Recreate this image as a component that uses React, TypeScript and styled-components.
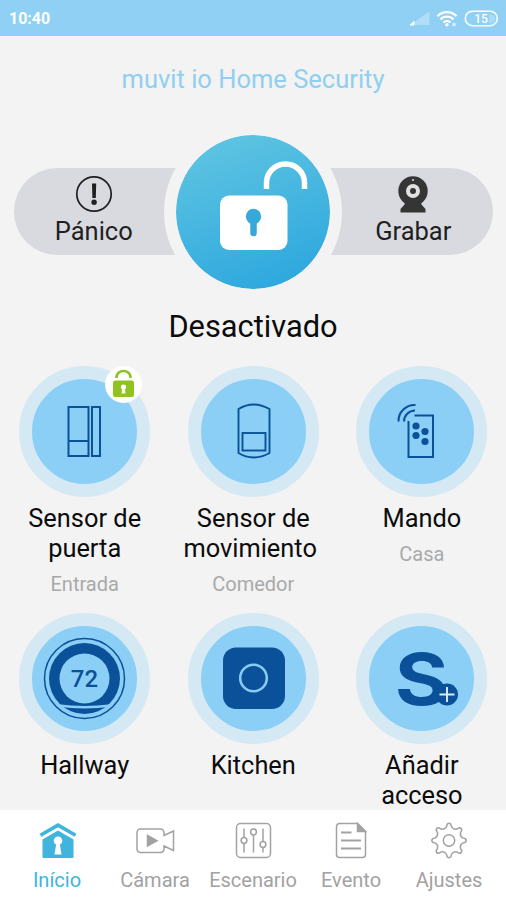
import React from 'react';
import styled, { createGlobalStyle } from 'styled-components';

const NAVY = '#0b5199';
const SKY = '#8bcff6';
const GREY = '#a2a2a2';
const PAGE = '#f3f3f3';

const GlobalStyle = createGlobalStyle`
  * { box-sizing: border-box; }
  body { margin: 0; background: ${PAGE}; font-family: Roboto, sans-serif; }
  svg { display: block; overflow: visible; }
`;

const Screen = styled.div`
  width: 506px;
  height: 900px;
  display: flex;
  flex-direction: column;
  overflow: hidden;
  background: ${PAGE};
`;

const StatusBar = styled.header`
  flex: 0 0 36px;
  display: flex;
  align-items: center;
  justify-content: space-between;
  padding: 1px 7px 0 9px;
  background: #8fd0f4;
  color: #fff;
`;

const Clock = styled.span`
  font-size: 16px;
  font-weight: 700;
`;

const Main = styled.main`
  flex: 1;
  min-height: 0;
  overflow: hidden;
`;

const Title = styled.h1`
  margin: 28px 0 0;
  height: 30px;
  line-height: 30px;
  text-align: center;
  font-size: 25.5px;
  font-weight: 400;
  letter-spacing: 0;
  color: #90cff1;
`;

const Hero = styled.section`
  display: flex;
  align-items: center;
  padding: 0 13px 0 14px;
  margin-top: 28.5px;
  height: 178px;
`;

const SideButton = styled.button<{ $side: 'left' | 'right' }>`
  flex: 1;
  height: 87px;
  border: 0;
  margin: 0;
  padding: ${p => (p.$side === 'left' ? '7px 21px 0 0' : '7px 0 0 21px')};
  border-radius: ${p => (p.$side === 'left' ? '44px 0 0 44px' : '0 44px 44px 0')};
  background: #d9dadf;
  display: flex;
  flex-direction: column;
  align-items: center;
  font: 400 25.5px/30px Roboto, sans-serif;
  color: #1f1f22;
`;

const SideLabel = styled.span`
  margin-top: 3px;
`;

const LockDial = styled.button`
  flex: 0 0 178px;
  height: 178px;
  margin: 0 -29px 0 -31px;
  padding: 0;
  border: 12px solid ${PAGE};
  border-radius: 50%;
  background: linear-gradient(160deg, #62c6e2 8%, #29a5de 92%) border-box;
  background-clip: padding-box;
  z-index: 1;
`;

const Status = styled.h2`
  margin: 10px 0 0;
  height: 32px;
  line-height: 32px;
  text-align: center;
  font-size: 30.8px;
  font-weight: 400;
  color: #0c0c0c;
`;

const DeviceGrid = styled.section`
  display: grid;
  grid-template-columns: repeat(3, 168.6px);
  grid-auto-rows: 247px;
  margin-top: 23.5px;
  padding-left: 0.4px;
`;

const Device = styled.article`
  display: flex;
  flex-direction: column;
  align-items: center;
  text-align: center;
`;

const Disc = styled.div`
  position: relative;
  width: 131px;
  height: 131px;
  border-radius: 50%;
  background: ${SKY};
  border: 13px solid #d5e9f4;
  display: grid;
  place-items: center;
`;

const LockBadge = styled.span`
  position: absolute;
  top: -13.5px;
  right: -5px;
  width: 37px;
  height: 37px;
  border-radius: 50%;
  background: #fff;
`;

const DeviceName = styled.h3`
  margin: 6px 0 0;
  font-size: 25.4px;
  line-height: 30px;
  font-weight: 400;
  color: #0c0c0c;
  white-space: pre-line;
`;

const DeviceRoom = styled.p`
  margin: 5.5px 0 0;
  font-size: 20px;
  line-height: 30px;
  color: #a9a9a9;
`;

const TabBar = styled.nav`
  flex: 0 0 90px;
  display: grid;
  grid-template-columns: repeat(5, 98px);
  justify-content: center;
  background: #fff;
`;

const Tab = styled.a<{ $active?: boolean }>`
  display: flex;
  flex-direction: column;
  align-items: center;
  padding-top: 10px;
  font-size: 20px;
  line-height: 24px;
  color: ${p => (p.$active ? '#3fb4dc' : GREY)};
`;

const TabLabel = styled.span`
  margin-top: 6px;
`;

const StatusIcons = () => (
  <svg width="90" height="20" viewBox="409 8 90 20" fill="none">
    <g transform="translate(0 -0.500)">
    <path d="M410 24.5 L429.500 24.500 V11Z" fill="#fff" opacity=".3" />
    <path d="M410 24.500 L414 21 V24.500Z" fill="#fff" stroke="#fff" />
    <g stroke="#fff" strokeWidth="2.300">
      <path d="M437.500 15.800a13 13 0 0 1 19 0" />
      <path d="M440.500 19a9 9 0 0 1 13 0" />
      <path d="M443.500 22a5 5 0 0 1 7 0" />
    </g>
    <circle cx="447" cy="24.300" r="1.700" fill="#fff" />
    <circle cx="454" cy="24" r="2" fill="#fff" opacity=".6" />
    <rect x="465.300" y="10.700" width="32" height="14.500" rx="7.200" stroke="#fff" strokeWidth="1.500" />
    <path d="M489 14v8.500h2a4 4 0 0 0 0-8.500z" fill="#fff" opacity=".25" />
    <text x="481" y="22.500" textAnchor="middle" fill="#fff" fontFamily="Roboto" fontSize="12" fontWeight="500">15</text>
    </g>
  </svg>
);

const AlertIcon = () => (
  <svg width="38" height="38" viewBox="0 0 38 38">
    <circle cx="19" cy="19" r="17.200" fill="none" stroke="#1f1f22" strokeWidth="1.700" />
    <path d="M17 8.500h4.200l-.4 14.500h-3.400z" fill="#1f1f22" />
    <circle cx="19.100" cy="27.300" r="2.700" fill="#1f1f22" />
  </svg>
);

const WebcamIcon = () => (
  <svg width="38" height="38" viewBox="0 0 38 38" fill="#353535">
    <path d="M12 26h14q1 4 5.500 8v3.500h-25V34q4.500-4 5.500-8z" />
    <circle cx="19" cy="16" r="14.700" />
    <circle cx="19" cy="16" r="5" fill="none" stroke="#e1e1e3" strokeWidth="4" />
    <circle cx="19" cy="5" r="1" fill="#d9dadf" />
  </svg>
);

const OpenLockIcon = () => (
  <svg width="154" height="154" viewBox="176 135 154 154">
    <path d="M266.500 189v-6a19 19 0 0 1 38 0v6" fill="none" stroke="#fff" strokeWidth="5.500" />
    <rect x="220" y="195.500" width="67.500" height="54.500" rx="9" fill="#fff" />
    <circle cx="253.500" cy="216.500" r="7.700" fill="#36a9da" />
    <path d="M253.500 219v14" stroke="#36a9da" strokeWidth="6.500" strokeLinecap="round" />
  </svg>
);

const GreenLockIcon = () => (
  <svg width="37" height="37" viewBox="0 0 37 37">
    <path d="M11.500 12v-1a7 6 0 0 1 14 0v1" fill="none" stroke="#8fc320" strokeWidth="2.700" />
    <rect x="8" y="14.500" width="21" height="16.500" rx="2.500" fill="#8fc320" />
    <circle cx="18.500" cy="21" r="2.600" fill="#fff" />
    <path d="M17.500 21h2l1 6.500h-4z" fill="#fff" />
  </svg>
);

const DoorSensorIcon = () => (
  <svg width="105" height="105" viewBox="0 0 105 105" fill="none" stroke={NAVY} strokeWidth="2">
    <rect x="36.500" y="28" width="20" height="49" />
    <path d="M36.500 62h20" />
    <rect x="60" y="28" width="8" height="49" />
  </svg>
);

const MotionSensorIcon = () => (
  <svg width="105" height="105" viewBox="0 0 105 105" fill="none" stroke={NAVY} strokeWidth="1.900">
    <path d="M37.500 30q15-9 31 0v44q-16 9-31 0z" />
    <rect x="41.500" y="54" width="23" height="17.500" />
  </svg>
);

const RemoteIcon = () => (
  <svg width="105" height="105" viewBox="0 0 105 105" fill="none" stroke={NAVY} strokeWidth="2">
    <path d="M45.500 36.500h18.500v41.500H39.500V42" />
    <path d="M29.500 42.500a16 16 0 0 1 17-16.500M35 42.500a11 11 0 0 1 11-11" strokeWidth="2.100" />
    <g fill={NAVY} stroke="none">
      <circle cx="47" cy="47" r="3.600" />
      <circle cx="56" cy="52.500" r="3.600" />
      <circle cx="47" cy="56.500" r="3.600" />
      <circle cx="56" cy="62.500" r="3.600" />
    </g>
  </svg>
);

const ThermostatIcon = () => (
  <svg width="105" height="105" viewBox="0 0 105 105">
    <circle cx="52.500" cy="52.500" r="40" fill="none" stroke={NAVY} strokeWidth="1.500" />
    <circle cx="52.500" cy="52.500" r="35.500" fill={NAVY} />
    <circle cx="52.500" cy="52.500" r="25" fill={SKY} />
    <path d="M26 79.500q26.500 3.500 53 0" fill="none" stroke={SKY} strokeWidth="2.500" />
    <text x="52.500" y="61" textAnchor="middle" fill={NAVY} fontFamily="Roboto" fontSize="24" fontWeight="500">72</text>
  </svg>
);

const CameraIcon = () => (
  <svg width="105" height="105" viewBox="0 0 105 105">
    <rect x="22" y="21.500" width="62" height="61.500" rx="13" fill={NAVY} />
    <circle cx="52.500" cy="52" r="13.300" fill="none" stroke="#87cbf2" strokeWidth="2.600" />
  </svg>
);

const AddAccessIcon = () => (
  <svg width="105" height="105" viewBox="0 0 105 105">
    <text transform="translate(52.500 78.500) scale(1.150 1)" textAnchor="middle" fill={NAVY} fontFamily="Inter" fontSize="71" fontWeight="700">S</text>
    <circle cx="78" cy="68.500" r="11" fill={NAVY} />
    <path d="M70.500 68.500h15M78 61v15" stroke="#dce9f8" strokeWidth="1.900" />
  </svg>
);

const HomeIcon = () => (
  <svg width="42" height="42" viewBox="-1 0 42 42">
    <path d="M21 10.500l15.500 9V37a1 1 0 0 1-1 1h-29a1 1 0 0 1-1-1V19.500z" fill="#3fb4dc" />
    <path d="M3.500 15.800L21 5.500l17.500 10.300" fill="none" stroke="#fff" strokeWidth="5.600" />
    <path d="M3.500 15.300L21 5.200l17.500 10.100" fill="none" stroke="#3fb4dc" strokeWidth="3.600" />
    <circle cx="21" cy="20.800" r="4.300" fill="#fff" />
    <path d="M19.500 22h3l2 12.500h-7z" fill="#fff" />
  </svg>
);

const VideoIcon = () => (
  <svg width="42" height="42" viewBox="-0.500 0 42 42" fill="none" stroke={GREY} strokeWidth="1.500">
    <path d="M6 9h20a3.500 3.500 0 0 1 3.500 3.500v3l9.500-4.500v19.500l-9.500-4.500v3A3.500 3.500 0 0 1 26 32.500H6A3.500 3.500 0 0 1 2.500 29V12.500A3.500 3.500 0 0 1 6 9z" />
    <path d="M13 15.500l9.500 5.200-9.500 5.300z" fill={GREY} />
  </svg>
);

const SlidersIcon = () => (
  <svg width="42" height="42" viewBox="-0.500 0 42 42" fill="none" stroke={GREY} strokeWidth="1.500">
    <rect x="4" y="3.500" width="34" height="34" rx="4" />
    <path d="M11.500 8.500v9M11.500 23.500v9M21 8.500v1M21 15v17.500M30.500 8.500v13M30.500 27.500v5" />
    <circle cx="11.500" cy="20.500" r="2.900" />
    <circle cx="21" cy="12" r="2.900" />
    <circle cx="30.500" cy="24.500" r="2.900" />
  </svg>
);

const DocumentIcon = () => (
  <svg width="42" height="42" viewBox="0 0 42 42" fill="none" stroke={GREY} strokeWidth="1.500">
    <path d="M9.500 3.500h18l8 8V34.500a3 3 0 0 1-3 3H9.500a3 3 0 0 1-3-3v-28a3 3 0 0 1 3-3z" />
    <path d="M27.500 3.500l8 8h-8z" fill={GREY} />
    <path d="M11 12.500h10.500M11 20.500h20M11 28.500h20" strokeWidth="1.800" />
  </svg>
);

const gearPath = (() => {
  const teeth = 8;
  let d = '';
  for (let i = 0; i < teeth; i++) {
    const at = (deg: number, r: number) => {
      const a = ((i * 45 + deg - 90) * Math.PI) / 180;
      return `${(21 + r * Math.cos(a)).toFixed(2)} ${(20.5 + r * Math.sin(a)).toFixed(2)}`;
    };
    d += `${i === 0 ? 'M' : 'L'}${at(-11, 13.8)}L${at(-6, 16.5)}Q${at(0, 18)} ${at(6, 16.5)}L${at(11, 13.8)}Q${at(22.5, 11.6)} ${at(34, 13.8)}`;
  }
  return d + 'Z';
})();

const GearIcon = () => (
  <svg width="42" height="42" viewBox="0 0 42 42" fill="none" stroke={GREY} strokeWidth="1.500" strokeLinejoin="round">
    <path d={gearPath} />
    <circle cx="21" cy="20.500" r="5.700" />
  </svg>
);

const devices = [
  { name: 'Sensor de\npuerta', room: 'Entrada', icon: <DoorSensorIcon />, unlocked: true },
  { name: 'Sensor de\nmovimiento\u00a0', room: 'Comedor', icon: <MotionSensorIcon /> },
  { name: 'Mando', room: 'Casa', icon: <RemoteIcon /> },
  { name: 'Hallway', icon: <ThermostatIcon /> },
  { name: 'Kitchen', icon: <CameraIcon /> },
  { name: 'Añadir\nacceso', icon: <AddAccessIcon /> },
];

const tabs = [
  { label: 'Início', icon: <HomeIcon />, active: true },
  { label: 'Cámara', icon: <VideoIcon /> },
  { label: 'Escenario', icon: <SlidersIcon /> },
  { label: 'Evento', icon: <DocumentIcon /> },
  { label: 'Ajustes', icon: <GearIcon /> },
];

export default function App() {
  return (
    <>
      <GlobalStyle />
      <Screen>
        <StatusBar>
          <Clock>10:40</Clock>
          <StatusIcons />
        </StatusBar>
        <Main>
          <Title>muvit io Home Security</Title>
          <Hero>
            <SideButton $side="left">
              <AlertIcon />
              <SideLabel>Pánico</SideLabel>
            </SideButton>
            <LockDial aria-label="Desactivado">
              <OpenLockIcon />
            </LockDial>
            <SideButton $side="right">
              <WebcamIcon />
              <SideLabel>Grabar</SideLabel>
            </SideButton>
          </Hero>
          <Status>Desactivado</Status>
          <DeviceGrid>
            {devices.map(d => (
              <Device key={d.name}>
                <Disc>
                  {d.icon}
                  {d.unlocked && (
                    <LockBadge>
                      <GreenLockIcon />
                    </LockBadge>
                  )}
                </Disc>
                <DeviceName>{d.name}</DeviceName>
                {d.room && <DeviceRoom>{d.room}</DeviceRoom>}
              </Device>
            ))}
          </DeviceGrid>
        </Main>
        <TabBar>
          {tabs.map(t => (
            <Tab key={t.label} $active={t.active}>
              {t.icon}
              <TabLabel>{t.label}</TabLabel>
            </Tab>
          ))}
        </TabBar>
      </Screen>
    </>
  );
}
